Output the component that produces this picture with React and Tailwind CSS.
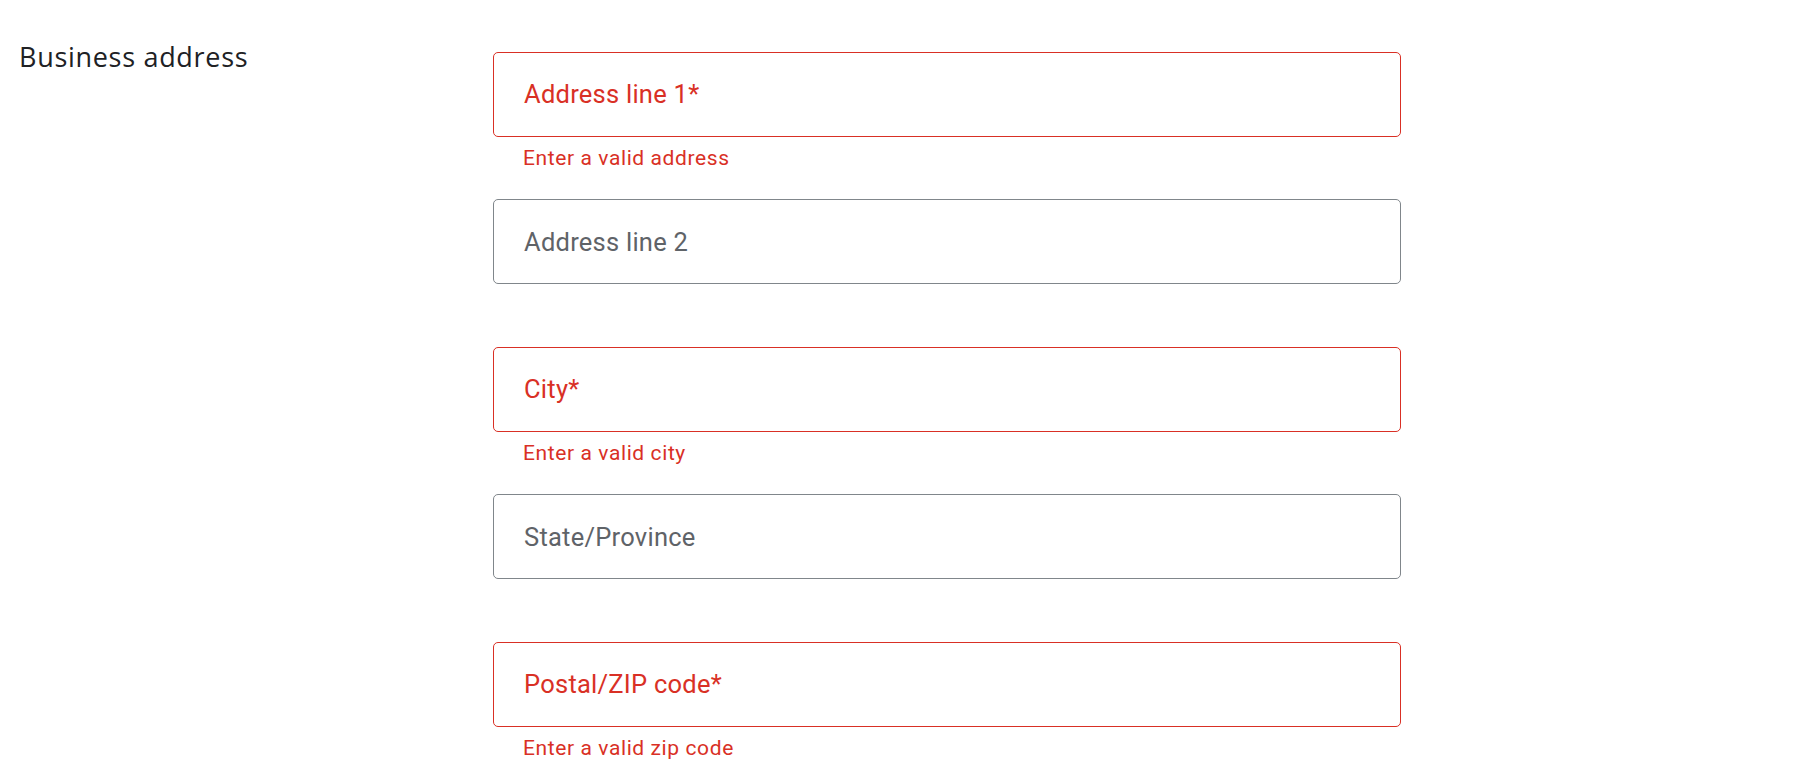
import React from "react";

const fields = [
  { label: "Address line 1*", error: "Enter a valid address" },
  { label: "Address line 2" },
  { label: "City*", error: "Enter a valid city" },
  { label: "State/Province" },
  { label: "Postal/ZIP code*", error: "Enter a valid zip code" },
];

const Field = ({ label, error }) => {
  return (
    <div className="h-[147.4px]">
      <div
        className={
          error
            ? "h-[85px] flex items-center px-[30px] border border-[#d93025] rounded-[5px] text-[#d93025]"
            : "h-[85px] flex items-center px-[30px] border border-[#80868b] rounded-[5px] text-[#5f6368]"
        }
      >
        <span className="text-[25.5px] tracking-[0.25px]">{label}</span>
      </div>
      {error && (
        <p className="mt-[9px] pl-[30px] text-[21px] leading-6 tracking-[0.6px] text-[#d93025]">
          {error}
        </p>
      )}
    </div>
  );
};

const App = () => {
  return (
    <div
      className="min-h-screen bg-white flex pt-[52px]"
      style={{ fontFamily: "Roboto, 'Liberation Sans', sans-serif" }}
    >
      <div className="w-[493px] shrink-0 pl-[19px]">
        <h2
          className="text-[27px] leading-[32px] -mt-[11px] font-medium tracking-[0.7px] text-[#202124]"
          style={{ fontFamily: "'Open Sans', sans-serif" }}
        >
          Business address
        </h2>
      </div>
      <div className="w-[908px] flex flex-col">
        {fields.map((f) => (
          <Field key={f.label} label={f.label} error={f.error} />
        ))}
      </div>
    </div>
  );
};

export default App;
